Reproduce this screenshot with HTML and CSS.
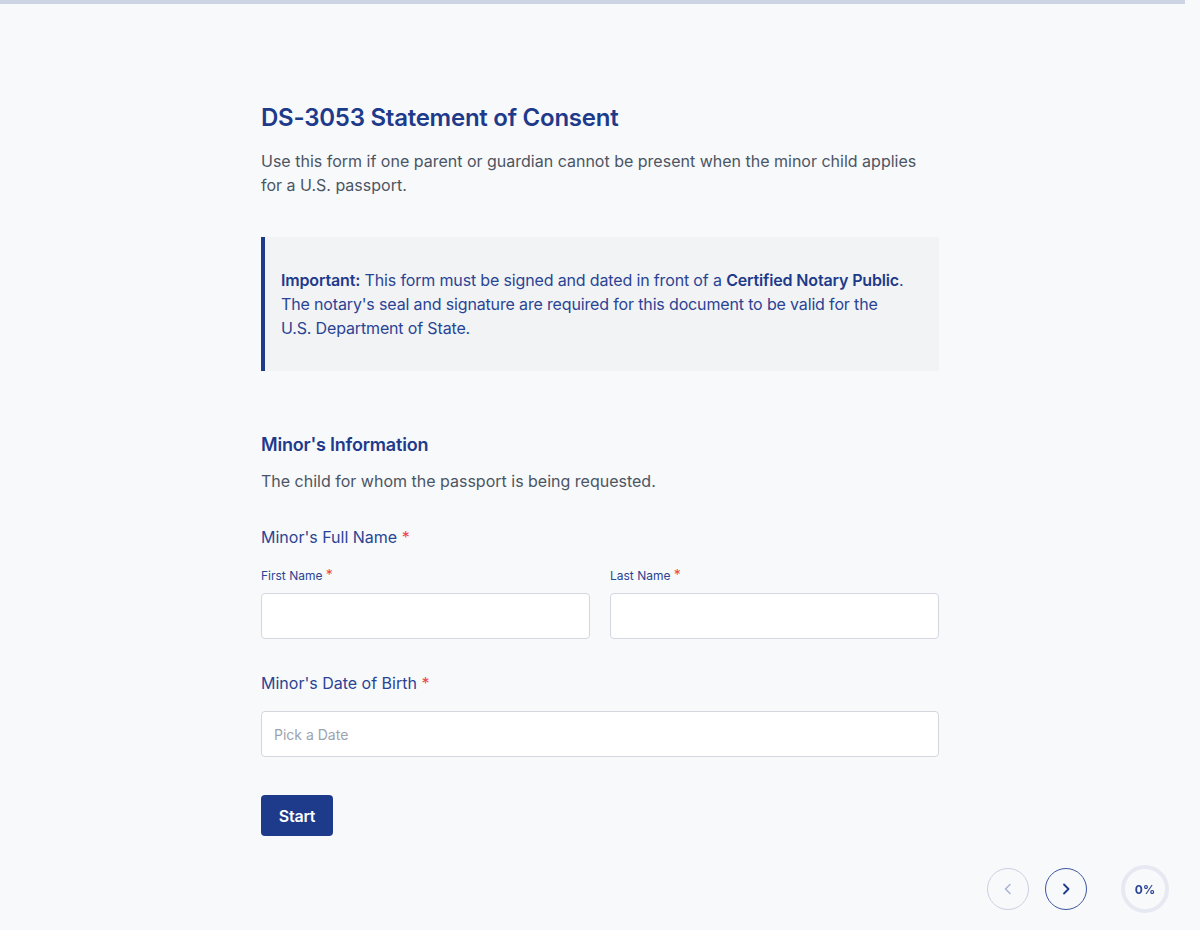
FILE: index.html
```html
<!DOCTYPE html>
<html lang="en">
<head>
    <meta charset="UTF-8">
    <meta name="viewport" content="width=device-width, initial-scale=1.0">
    <title>DS-3053 Statement of Consent</title>
    <link rel="stylesheet" href="styles.css">
</head>
<body>
    <div class="top-progress"></div>

    <div class="container">
        <h1>DS-3053 Statement of Consent</h1>
        <p class="intro">Use this form if one parent or guardian cannot be present when the minor child applies for a U.S. passport.</p>

        <div class="notice">
            <p><strong>Important:</strong> This form must be signed and dated in front of a <strong>Certified Notary Public</strong>.<br>The notary's seal and signature are required for this document to be valid for the<br>U.S. Department of State.</p>
        </div>

        <h2>Minor's Information</h2>
        <p class="section-desc">The child for whom the passport is being requested.</p>

        <div class="field">
            <label class="field-label">Minor's Full Name <span class="req">*</span></label>
            <div class="name-row">
                <div class="sub-field">
                    <label class="sub-label" for="firstName">First Name <span class="req">*</span></label>
                    <input type="text" id="firstName">
                </div>
                <div class="sub-field">
                    <label class="sub-label" for="lastName">Last Name <span class="req">*</span></label>
                    <input type="text" id="lastName">
                </div>
            </div>
        </div>

        <div class="field dob-field">
            <label class="field-label dob-label" for="dob">Minor's Date of Birth <span class="req">*</span></label>
            <input type="text" id="dob" placeholder="Pick a Date">
        </div>

        <button class="start-btn">Start</button>
    </div>

    <div class="nav-controls">
        <button class="nav-btn disabled" aria-label="Previous">
            <svg width="16" height="16" viewBox="0 0 16 16" fill="none" stroke="currentColor" stroke-width="1.6" stroke-linecap="round" stroke-linejoin="round"><path d="M10 3.5 5.5 8l4.5 4.5"/></svg>
        </button>
        <button class="nav-btn" aria-label="Next">
            <svg width="16" height="16" viewBox="0 0 16 16" fill="none" stroke="currentColor" stroke-width="1.8" stroke-linecap="round" stroke-linejoin="round"><path d="M6 3.5 10.5 8 6 12.5"/></svg>
        </button>
        <div class="progress-ring">0%</div>
    </div>
</body>
</html>
```

FILE: styles.css
```css
body {
    font-family: Inter, "Noto Sans", sans-serif;
    margin: 0;
    background-color: #f8f9fb;
    color: #1e3a8a;
}

.top-progress {
    height: 4px;
    width: calc(100% - 15px);
    background-color: #cdd4e4;
}

.container {
    width: 678px;
    margin: 0 auto;
    padding: 98px 0 60px;
}

h1 {
    font-size: 24px;
    line-height: 32px;
    font-weight: 600;
    letter-spacing: -0.25px;
    margin: 0 0 15px;
    color: #1e3a8a;
}

.intro {
    font-size: 16px;
    line-height: 24px;
    color: #4b5563;
    margin: 0 0 40px;
}

.notice {
    background-color: #f2f3f5;
    border-left: 4px solid #1e3a8a;
    padding: 31px 10px 31px 16px;
}

.notice p {
    margin: 0;
    font-size: 16px;
    line-height: 24px;
    letter-spacing: -0.15px;
    white-space: nowrap;
    color: #2a4494;
}

.notice strong {
    font-weight: 600;
    color: #1e3a8a;
}

h2 {
    font-size: 18px;
    line-height: 28px;
    font-weight: 600;
    letter-spacing: -0.2px;
    margin: 60px 0 10px;
    color: #1e3a8a;
}

.section-desc {
    font-size: 16px;
    line-height: 24px;
    color: #4b5563;
    margin: 0 0 32px;
}

.field {
    margin-bottom: 32px;
}

.field-label {
    display: block;
    font-size: 16px;
    line-height: 24px;
    color: #2a4494;
    margin-bottom: 19px;
}

.dob-label {
    margin-bottom: 16px;
}

.req {
    color: #ef4444;
}

.name-row {
    display: grid;
    grid-template-columns: 1fr 1fr;
    gap: 20px;
}

.sub-label {
    display: block;
    font-size: 12px;
    line-height: 16px;
    color: #2a4494;
    margin-bottom: 9px;
}

.sub-label .req {
    font-size: 14px;
    line-height: 14px;
}

input {
    display: block;
    box-sizing: border-box;
    width: 100%;
    height: 46px;
    padding: 0 12px;
    border: 1px solid #d4d7de;
    border-radius: 4px;
    background-color: #fff;
    font-family: inherit;
    font-size: 14px;
    color: #111827;
}

input::placeholder {
    color: #9ca3af;
}

.dob-field {
    margin-bottom: 38px;
}

.start-btn {
    display: block;
    background-color: #1e3a8a;
    color: #fff;
    font-family: inherit;
    font-size: 16px;
    font-weight: 600;
    letter-spacing: -0.2px;
    width: 72px;
    height: 41px;
    border: none;
    border-radius: 4px;
    cursor: pointer;
}

.nav-controls {
    position: fixed;
    right: 31px;
    bottom: 17px;
    display: flex;
    align-items: center;
    gap: 16px;
}

.nav-btn {
    width: 42px;
    height: 42px;
    border-radius: 50%;
    border: 1.5px solid #3b55a0;
    background: transparent;
    color: #1e3a8a;
    display: flex;
    align-items: center;
    justify-content: center;
    padding: 0;
    cursor: pointer;
}

.nav-btn.disabled {
    border-color: #c9d0e3;
    color: #aab5d4;
}

.progress-ring {
    box-sizing: border-box;
    width: 48px;
    height: 48px;
    border-radius: 50%;
    border: 4px solid #e6e9f1;
    margin-left: 18px;
    display: flex;
    align-items: center;
    justify-content: center;
    font-size: 12px;
    font-weight: 700;
    color: #2a4494;
}
```
